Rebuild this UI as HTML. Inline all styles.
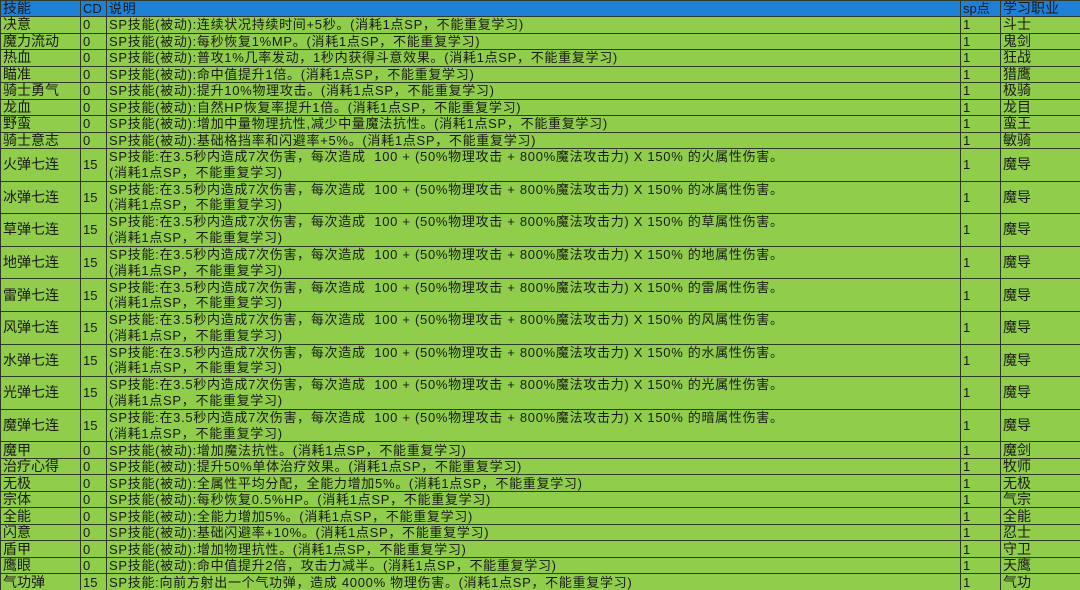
<!DOCTYPE html>
<html><head><meta charset="utf-8"><style>
html,body{margin:0;padding:0;width:1080px;height:590px;overflow:hidden;background:#8fcd4a;}
table{border-collapse:collapse;table-layout:fixed;width:1080px;font-family:"Liberation Sans","Noto Sans CJK SC",sans-serif;font-size:13px;color:#1a1a1a;}
td{border:1px solid #2f3a28;padding:0 0 0 2px;overflow:hidden;white-space:pre;line-height:15px;vertical-align:middle;background:#8fcd4a;}
tr.h td{background:#1f80d8;height:15px;}
tr.s td{height:15.5px;}
tr.d td{height:31.6px;}
td.n,td.j{font-size:14px;}
td.x{letter-spacing:0.7px;}
td.dd{line-height:15.5px;}
</style></head><body>
<table>
<colgroup><col style="width:80px"><col style="width:26px"><col style="width:854px"><col style="width:40px"><col style="width:80px"></colgroup>
<tr class="h"><td class="n">技能</td><td>CD</td><td class="x">说明</td><td>sp点</td><td class="j">学习职业</td></tr>
<tr class="s"><td class="n">决意</td><td>0</td><td class="x">SP技能(被动):连续状况持续时间+5秒。(消耗1点SP，不能重复学习)</td><td>1</td><td class="j">斗士</td></tr>
<tr class="s"><td class="n">魔力流动</td><td>0</td><td class="x">SP技能(被动):每秒恢复1%MP。(消耗1点SP，不能重复学习)</td><td>1</td><td class="j">鬼剑</td></tr>
<tr class="s"><td class="n">热血</td><td>0</td><td class="x">SP技能(被动):普攻1%几率发动，1秒内获得斗意效果。(消耗1点SP，不能重复学习)</td><td>1</td><td class="j">狂战</td></tr>
<tr class="s"><td class="n">瞄准</td><td>0</td><td class="x">SP技能(被动):命中值提升1倍。(消耗1点SP，不能重复学习)</td><td>1</td><td class="j">猎鹰</td></tr>
<tr class="s"><td class="n">骑士勇气</td><td>0</td><td class="x">SP技能(被动):提升10%物理攻击。(消耗1点SP，不能重复学习)</td><td>1</td><td class="j">极骑</td></tr>
<tr class="s"><td class="n">龙血</td><td>0</td><td class="x">SP技能(被动):自然HP恢复率提升1倍。(消耗1点SP，不能重复学习)</td><td>1</td><td class="j">龙目</td></tr>
<tr class="s"><td class="n">野蛮</td><td>0</td><td class="x">SP技能(被动):增加中量物理抗性,减少中量魔法抗性。(消耗1点SP，不能重复学习)</td><td>1</td><td class="j">蛮王</td></tr>
<tr class="s"><td class="n">骑士意志</td><td>0</td><td class="x">SP技能(被动):基础格挡率和闪避率+5%。(消耗1点SP，不能重复学习)</td><td>1</td><td class="j">敏骑</td></tr>
<tr class="d"><td class="n">火弹七连</td><td>15</td><td class="x dd">SP技能:在3.5秒内造成7次伤害，每次造成  100 + (50%物理攻击 + 800%魔法攻击力) X 150% 的火属性伤害。
(消耗1点SP，不能重复学习)</td><td>1</td><td class="j">魔导</td></tr>
<tr class="d"><td class="n">冰弹七连</td><td>15</td><td class="x dd">SP技能:在3.5秒内造成7次伤害，每次造成  100 + (50%物理攻击 + 800%魔法攻击力) X 150% 的冰属性伤害。
(消耗1点SP，不能重复学习)</td><td>1</td><td class="j">魔导</td></tr>
<tr class="d"><td class="n">草弹七连</td><td>15</td><td class="x dd">SP技能:在3.5秒内造成7次伤害，每次造成  100 + (50%物理攻击 + 800%魔法攻击力) X 150% 的草属性伤害。
(消耗1点SP，不能重复学习)</td><td>1</td><td class="j">魔导</td></tr>
<tr class="d"><td class="n">地弹七连</td><td>15</td><td class="x dd">SP技能:在3.5秒内造成7次伤害，每次造成  100 + (50%物理攻击 + 800%魔法攻击力) X 150% 的地属性伤害。
(消耗1点SP，不能重复学习)</td><td>1</td><td class="j">魔导</td></tr>
<tr class="d"><td class="n">雷弹七连</td><td>15</td><td class="x dd">SP技能:在3.5秒内造成7次伤害，每次造成  100 + (50%物理攻击 + 800%魔法攻击力) X 150% 的雷属性伤害。
(消耗1点SP，不能重复学习)</td><td>1</td><td class="j">魔导</td></tr>
<tr class="d"><td class="n">风弹七连</td><td>15</td><td class="x dd">SP技能:在3.5秒内造成7次伤害，每次造成  100 + (50%物理攻击 + 800%魔法攻击力) X 150% 的风属性伤害。
(消耗1点SP，不能重复学习)</td><td>1</td><td class="j">魔导</td></tr>
<tr class="d"><td class="n">水弹七连</td><td>15</td><td class="x dd">SP技能:在3.5秒内造成7次伤害，每次造成  100 + (50%物理攻击 + 800%魔法攻击力) X 150% 的水属性伤害。
(消耗1点SP，不能重复学习)</td><td>1</td><td class="j">魔导</td></tr>
<tr class="d"><td class="n">光弹七连</td><td>15</td><td class="x dd">SP技能:在3.5秒内造成7次伤害，每次造成  100 + (50%物理攻击 + 800%魔法攻击力) X 150% 的光属性伤害。
(消耗1点SP，不能重复学习)</td><td>1</td><td class="j">魔导</td></tr>
<tr class="d"><td class="n">魔弹七连</td><td>15</td><td class="x dd">SP技能:在3.5秒内造成7次伤害，每次造成  100 + (50%物理攻击 + 800%魔法攻击力) X 150% 的暗属性伤害。
(消耗1点SP，不能重复学习)</td><td>1</td><td class="j">魔导</td></tr>
<tr class="s"><td class="n">魔甲</td><td>0</td><td class="x">SP技能(被动):增加魔法抗性。(消耗1点SP，不能重复学习)</td><td>1</td><td class="j">魔剑</td></tr>
<tr class="s"><td class="n">治疗心得</td><td>0</td><td class="x">SP技能(被动):提升50%单体治疗效果。(消耗1点SP，不能重复学习)</td><td>1</td><td class="j">牧师</td></tr>
<tr class="s"><td class="n">无极</td><td>0</td><td class="x">SP技能(被动):全属性平均分配，全能力增加5%。(消耗1点SP，不能重复学习)</td><td>1</td><td class="j">无极</td></tr>
<tr class="s"><td class="n">宗体</td><td>0</td><td class="x">SP技能(被动):每秒恢复0.5%HP。(消耗1点SP，不能重复学习)</td><td>1</td><td class="j">气宗</td></tr>
<tr class="s"><td class="n">全能</td><td>0</td><td class="x">SP技能(被动):全能力增加5%。(消耗1点SP，不能重复学习)</td><td>1</td><td class="j">全能</td></tr>
<tr class="s"><td class="n">闪意</td><td>0</td><td class="x">SP技能(被动):基础闪避率+10%。(消耗1点SP，不能重复学习)</td><td>1</td><td class="j">忍士</td></tr>
<tr class="s"><td class="n">盾甲</td><td>0</td><td class="x">SP技能(被动):增加物理抗性。(消耗1点SP，不能重复学习)</td><td>1</td><td class="j">守卫</td></tr>
<tr class="s"><td class="n">鹰眼</td><td>0</td><td class="x">SP技能(被动):命中值提升2倍，攻击力减半。(消耗1点SP，不能重复学习)</td><td>1</td><td class="j">天鹰</td></tr>
<tr class="s"><td class="n">气功弹</td><td>15</td><td class="x">SP技能:向前方射出一个气功弹，造成 4000% 物理伤害。(消耗1点SP，不能重复学习)</td><td>1</td><td class="j">气功</td></tr>
</table>
</body></html>
